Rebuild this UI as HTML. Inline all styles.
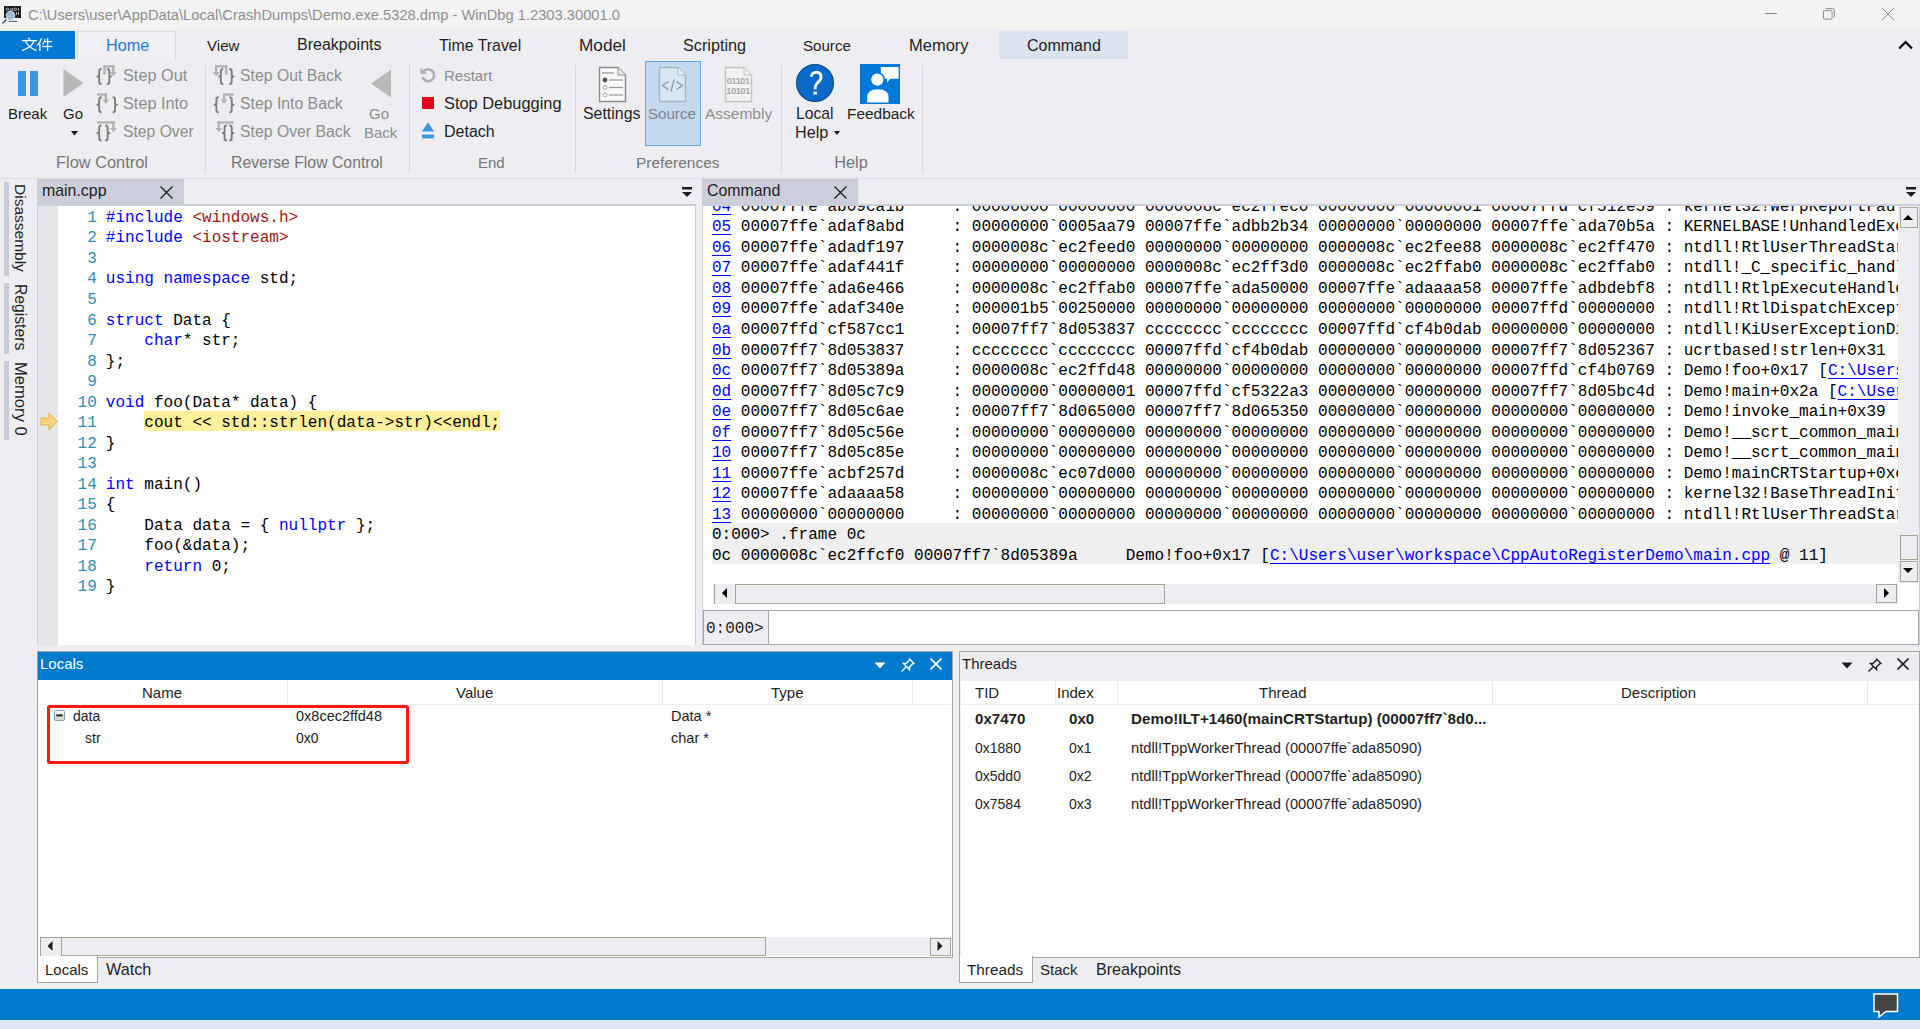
<!DOCTYPE html>
<html><head><meta charset="utf-8">
<style>
*{margin:0;padding:0;box-sizing:border-box}
html,body{width:1920px;height:1029px;overflow:hidden;background:#eeeef2;font-family:"Liberation Sans",sans-serif;font-size:15px;color:#1e1e1e}
.a{position:absolute;white-space:nowrap}
.mono{font-family:"Liberation Mono",monospace;font-size:16.05px}
#title{left:0;top:0;width:1920px;height:29px;background:#f3f3f3}
#tabs{left:0;top:31px;width:1920px;height:29px;background:#eeeef2}
#ribbon{left:0;top:60px;width:1920px;height:119px;background:#eeeef2;border-bottom:1px solid #dcdce2}
.sep{position:absolute;width:1px;background:#d6d6de}
.glabel{position:absolute;top:94px;line-height:17px;color:#767676;font-size:15px;text-align:center}
.grey{color:#8d8d8d}
.panel{position:absolute}
.lbl{font-size:15px;line-height:17px}
.vt{writing-mode:vertical-rl;font-size:15px;line-height:17px;color:#1e1e1e}
.k{color:#0000ff}.s{color:#a31515}
u.ln{color:#0000ff;text-decoration:underline;text-underline-offset:3px}
.hd{font-size:15px;line-height:17px;color:#1e1e1e}
.cell{font-size:14px;line-height:17px;color:#1e1e1e}
</style></head><body>
<div id="title" class="a">
  <svg class="a" style="left:0;top:2px" width="26" height="26" viewBox="0 0 26 26">
    <rect x="3.5" y="3.5" width="18.5" height="13" fill="#fff"/>
    <rect x="4" y="4" width="17" height="12" fill="#1a1c1e"/>
    <g fill="none" stroke="#bbb" stroke-width="1">
      <circle cx="7.4" cy="7.3" r="1.2"/><circle cx="15.4" cy="7.3" r="1.2"/>
    </g>
    <g fill="#bbb"><rect x="10.3" y="6" width="0.9" height="2.7"/><rect x="12.2" y="6" width="0.9" height="2.7"/><rect x="18" y="6" width="1" height="2.7"/>
    <rect x="16" y="10.1" width="1" height="2.8"/><rect x="18" y="10.1" width="1" height="2.8"/></g>
    <path d="M8.5 19.4H17" stroke="#fff" stroke-width="2.6"/>
    <path d="M8.5 19.4H17" stroke="#5c6a74" stroke-width="1.2"/>
    <circle cx="10.5" cy="13.4" r="4.4" fill="#9cbcd8" stroke="#c8d4dc" stroke-width="1"/>
    <path d="M2.5 21.5L6.5 17.3" stroke="#fff" stroke-width="3"/>
    <path d="M2.5 21.5L6.5 17.3" stroke="#50606c" stroke-width="1.8"/>
  </svg>
  <div class="a" style="left:28px;top:7px;font-size:14.7px;color:#8f8f8f">C:\Users\user\AppData\Local\CrashDumps\Demo.exe.5328.dmp - WinDbg 1.2303.30001.0</div>
  <div class="a" style="left:1765px;top:13px;width:12px;height:1px;background:#8a8a8a"></div>
  <svg class="a" style="left:1822px;top:7px" width="14" height="14" viewBox="0 0 14 14"><rect x="1.5" y="3.6" width="8.6" height="8.6" rx="1.3" fill="none" stroke="#8a8a8a" stroke-width="1"/><path d="M3.8 1.6H10.6Q12.4 1.6 12.4 3.4V10" fill="none" stroke="#8a8a8a" stroke-width="1"/></svg>
  <svg class="a" style="left:1881px;top:7px" width="14" height="14"><path d="M1 1L13 13M13 1L1 13" stroke="#8a8a8a" stroke-width="1"/></svg>
</div>
<div id="tabs" class="a">
  <div class="a" style="left:0;top:0;width:75px;height:28px;background:#0078d4"></div>
  <svg class="a" style="left:20px;top:5px" width="34" height="16" viewBox="20 36 34 16">
    <g fill="none" stroke="#fff" stroke-width="1.3" stroke-linecap="butt">
      <path d="M28.2 37.9L30.2 39.6"/>
      <path d="M21.9 40.6H37.1"/>
      <path d="M25.4 41.1Q28 47.5 36.6 50.6"/>
      <path d="M34.2 41.1Q31.5 47.5 22.1 50.6"/>
      <path d="M41.6 38.2Q40 43 37.2 45.6"/>
      <path d="M39.9 43.6V50.9"/>
      <path d="M45.1 39.2Q44.3 42.5 42.5 44.6"/>
      <path d="M44.4 41.6H51.9"/>
      <path d="M42.2 46.5H52.4"/>
      <path d="M47.6 37.9V50.9"/>
    </g>
  </svg>
  <div class="a" style="left:77px;top:0;width:99px;height:29px;background:#f0f0f4;border:1px solid #dcdce2;border-bottom:none"></div>
  <div class="a" style="left:106px;top:4.9px;color:#1c7cd6;font-size:16.2px">Home</div>
  <div class="a" style="left:207px;top:5.93px;font-size:15.1px">View</div>
  <div class="a" style="left:297px;top:5.12px;font-size:16px">Breakpoints</div>
  <div class="a" style="left:439px;top:5.8px;font-size:15.85px">Time Travel</div>
  <div class="a" style="left:579px;top:4.03px;font-size:17.2px">Model</div>
  <div class="a" style="left:683px;top:4.94px;font-size:16.2px">Scripting</div>
  <div class="a" style="left:803px;top:5.93px;font-size:15.1px">Source</div>
  <div class="a" style="left:909px;top:4.67px;font-size:16.5px">Memory</div>
  <div class="a" style="left:999px;top:0;width:129px;height:28px;background:#dae3ee"></div>
  <div class="a" style="left:1027px;top:5.7px;font-size:16px">Command</div>
  <svg class="a" style="left:1898px;top:9px" width="16" height="10"><path d="M1.2 8.5L7.6 2L14 8.5" fill="none" stroke="#000" stroke-width="2.2"/></svg>
</div>
<div id="ribbon" class="a">
  <!-- Break -->
  <div class="a" style="left:18px;top:11px;width:8px;height:25px;background:#3a96e0"></div>
  <div class="a" style="left:30px;top:11px;width:8px;height:25px;background:#3a96e0"></div>
  <div class="a lbl" style="left:8px;top:45px">Break</div>
  <svg class="a" style="left:63px;top:9px" width="21" height="28"><path d="M0.5 0L20.5 14L0.5 28Z" fill="#b8b8b8"/></svg>
  <div class="a lbl" style="left:63px;top:45px">Go</div>
  <svg class="a" style="left:71px;top:71px" width="7" height="5"><path d="M0 0H7L3.5 4.5Z" fill="#111"/></svg>
  <!-- step icons -->
  
  <div class="a lbl grey" style="left:123px;top:7px;font-size:16.3px">Step Out</div>
  <div class="a lbl grey" style="left:123px;top:35px;font-size:16.3px">Step Into</div>
  <div class="a lbl grey" style="left:123px;top:63px;font-size:15.7px">Step Over</div>
  <div class="glabel" style="left:56px;width:91px;font-size:16.4px">Flow Control</div>
  <div class="sep" style="left:205px;top:5px;height:108px"></div>
  
  <div class="a lbl grey" style="left:240px;top:7px;font-size:15.8px">Step Out Back</div>
  <div class="a lbl grey" style="left:240px;top:35px;font-size:15.8px">Step Into Back</div>
  <div class="a lbl grey" style="left:240px;top:63px;font-size:15.8px">Step Over Back</div>
  <svg class="a" style="left:370px;top:9px" width="22" height="29"><path d="M21 0.5L1 14.5L21 28.5Z" fill="#b8b8b8"/></svg>
  <div class="a lbl grey" style="left:369px;top:45px">Go</div>
  <div class="a lbl grey" style="left:364px;top:64px">Back</div>
  <div class="glabel" style="left:231px;width:151px;font-size:15.8px">Reverse Flow Control</div>
  <div class="sep" style="left:409px;top:5px;height:108px"></div>
  <svg class="a" style="left:419px;top:6px" width="18" height="18" viewBox="0 0 18 18"><path d="M4.5 5.5A6 6 0 1 1 3.5 11" fill="none" stroke="#b0b0b0" stroke-width="2.6"/><path d="M1.5 1.5V8H8Z" fill="#b0b0b0"/></svg>
  <div class="a lbl grey" style="left:444px;top:7px">Restart</div>
  <div class="a" style="left:422px;top:37px;width:12px;height:12px;background:#e3001b"></div>
  <div class="a lbl" style="left:444px;top:35px;font-size:16.4px">Stop Debugging</div>
  <svg class="a" style="left:421px;top:62px" width="14" height="17"><path d="M7 0.3L13 9.5H1Z" fill="#3a96e0"/><rect x="1" y="12.6" width="12" height="3.8" fill="#3a96e0"/></svg>
  <div class="a lbl" style="left:444px;top:63px;font-size:16px">Detach</div>
  <div class="glabel" style="left:478px;width:26px">End</div>
  <div class="sep" style="left:575px;top:5px;height:108px"></div>
  <!-- settings -->
  <svg class="a" style="left:598px;top:6px" width="29" height="37" viewBox="0 0 29 37">
    <path d="M1.5 1.5H20L27.5 9V35.5H1.5Z" fill="#f8f8f8" stroke="#8c8c8c" stroke-width="1.4"/>
    <path d="M20 1.5V9H27.5" fill="#e8e8e8" stroke="#8c8c8c" stroke-width="1"/>
    <line x1="4" y1="7" x2="16" y2="7" stroke="#999" stroke-width="1.2"/>
    <circle cx="7" cy="14" r="2.4" fill="#555"/>
    <line x1="11" y1="14" x2="25" y2="14" stroke="#999" stroke-width="1.2"/>
    <circle cx="7" cy="21.5" r="2" fill="none" stroke="#aaa"/>
    <line x1="11" y1="21.5" x2="25" y2="21.5" stroke="#999" stroke-width="1.2"/>
    <circle cx="7" cy="29" r="2" fill="none" stroke="#aaa"/>
    <line x1="11" y1="29" x2="25" y2="29" stroke="#999" stroke-width="1.2"/>
  </svg>
  <div class="a lbl" style="left:583px;top:45px;font-size:15.9px">Settings</div>
  <div class="a" style="left:645px;top:1px;width:56px;height:85px;background:#c4d9ee;border:1px solid #5fa8e4"></div>
  <svg class="a" style="left:658px;top:6px" width="29" height="37" viewBox="0 0 29 37">
    <path d="M1.5 1.5H20L27.5 9V35.5H1.5Z" fill="#dae6f2" stroke="#a9b6c2" stroke-width="1.4"/>
    <path d="M20 1.5V9H27.5" fill="#e8eef4" stroke="#a9b6c2" stroke-width="1"/>
    <path d="M10.5 15.5L4.5 19.5L10.5 23.5M18.5 15.5L24.5 19.5L18.5 23.5M16 13.5L13 25.5" fill="none" stroke="#8d959d" stroke-width="1.2"/>
  </svg>
  <div class="a lbl" style="left:648px;top:45px;color:#7d8590;font-size:15.1px">Source</div>
  <svg class="a" style="left:724px;top:6px" width="29" height="37" viewBox="0 0 29 37">
    <path d="M1.5 1.5H20L27.5 9V35.5H1.5Z" fill="#f3f3f3" stroke="#c4c4c4" stroke-width="1.4"/>
    <path d="M20 1.5V9H27.5" fill="#eee" stroke="#c4c4c4" stroke-width="1"/>
    <text x="14" y="17.5" font-family="Liberation Sans" font-size="9.5" font-weight="bold" fill="#aaa" text-anchor="middle" letter-spacing="-0.6">01101</text>
    <text x="14" y="28" font-family="Liberation Sans" font-size="9.5" font-weight="bold" fill="#aaa" text-anchor="middle" letter-spacing="-0.6">10101</text>
  </svg>
  <div class="a lbl grey" style="left:705px;top:45px;font-size:15.5px">Assembly</div>
  <div class="glabel" style="left:636px;width:83px;font-size:15.5px">Preferences</div>
  <div class="sep" style="left:781px;top:5px;height:108px"></div>
  <svg class="a" style="left:795px;top:3px" width="40" height="40" viewBox="0 0 40 40">
    <circle cx="20" cy="20" r="18.4" fill="#096ac8" stroke="#0b4d8c" stroke-width="1.3"/>
    <path d="M16.3 13.8Q16.8 9.4 21.4 9.4Q26 9.4 26 13.9Q26 16.9 23 19.4Q20.2 21.7 20.2 24.5V26.2" fill="none" stroke="#fff" stroke-width="2.8"/>
    <rect x="18.5" y="28.6" width="3.4" height="3" fill="#fff"/>
  </svg>
  <div class="a lbl" style="left:796px;top:45px;font-size:15.7px">Local</div>
  <div class="a lbl" style="left:795px;top:64px;font-size:16.2px">Help</div>
  <svg class="a" style="left:834px;top:71px" width="6" height="5"><path d="M0 0H6L3 4Z" fill="#111"/></svg>
  <svg class="a" style="left:860px;top:4px" width="40" height="40" viewBox="0 0 40 40">
    <rect width="40" height="40" fill="#0078d7"/>
    <path d="M20.8 2.9H38.6V14.8H30.5L27 18.6V14.8H20.8Z" fill="#fff"/>
    <circle cx="17.3" cy="15.6" r="6.9" fill="#fff" stroke="#0078d7" stroke-width="1.6"/>
    <path d="M7.2 38.6V33Q7.2 25.2 17.8 25.2Q28.5 25.2 28.5 33V38.6Z" fill="#fff"/>
  </svg>
  <div class="a lbl" style="left:847px;top:45px;font-size:15.45px">Feedback</div>
  <div class="glabel" style="left:834px;width:34px;font-size:16.4px">Help</div>
  <div class="sep" style="left:922px;top:5px;height:108px"></div>
</div>
<svg class="a" style="left:0;top:0" width="300" height="150"><path d="M103.3 65.2H114.6V67.6H105.8V74.6H103.3Z" fill="#b3b3b3"/><path d="M112 65.2H114.6V72.1H116.8L113.3 76.3L109.8 72.1H112Z" fill="#b3b3b3"/><path d="M97 93.3H107V95.7H97Z" fill="#b3b3b3"/><path d="M104.6 93.3H107V99.6H109.3L105.8 103.8L102.3 99.6H104.6Z" fill="#b3b3b3"/><path d="M97 121.3H114.6V123.7H97Z" fill="#b3b3b3"/><path d="M112.2 121.3H114.6V127.99999999999999H116.9L113.4 132.2L109.9 127.99999999999999H112.2Z" fill="#b3b3b3"/><path d="M215 65.2H227.5V74.6H225.1V67.6H215Z" fill="#b3b3b3"/><path d="M215 65.2H217.4V72.1H219.7L216.2 76.3L212.7 72.1H215Z" fill="#b3b3b3"/><path d="M222.9 93.3H233.8V95.7H222.9Z" fill="#b3b3b3"/><path d="M222.9 93.3H225.3V99.6H227.60000000000002L224.10000000000002 103.8L220.60000000000002 99.6H222.9Z" fill="#b3b3b3"/><path d="M217.5 121.3H233.8V123.7H217.5Z" fill="#b3b3b3"/><path d="M217.5 121.3H219.9V127.99999999999999H222.2L218.7 132.2L215.2 127.99999999999999H217.5Z" fill="#b3b3b3"/><g fill="none" stroke="#7d7d7d" stroke-width="1.9" stroke-linejoin="round"><path d="M101.6 68.9Q99.2 68.9 99.2 71.2V74.9Q99.2 76.5 97.4 76.5Q99.2 76.5 99.2 78.1V81.8Q99.2 84.1 101.6 84.1"/><path d="M106.9 68.9Q109.3 68.9 109.3 71.2V74.9Q109.3 76.5 111.1 76.5Q109.3 76.5 109.3 78.1V81.8Q109.3 84.1 106.9 84.1"/><path d="M101.6 97.2Q99.2 97.2 99.2 99.5V103.2Q99.2 104.8 97.4 104.8Q99.2 104.8 99.2 106.39999999999999V110.1Q99.2 112.39999999999999 101.6 112.39999999999999"/><path d="M112.60000000000001 97.2Q115.0 97.2 115.0 99.5V103.2Q115.0 104.8 116.8 104.8Q115.0 104.8 115.0 106.39999999999999V110.1Q115.0 112.39999999999999 112.60000000000001 112.39999999999999"/><path d="M101.6 125.4Q99.2 125.4 99.2 127.7V131.4Q99.2 133.0 97.4 133.0Q99.2 133.0 99.2 134.6V138.3Q99.2 140.6 101.6 140.6"/><path d="M105.2 125.4Q107.6 125.4 107.6 127.7V131.4Q107.6 133.0 109.39999999999999 133.0Q107.6 133.0 107.6 134.6V138.3Q107.6 140.6 105.2 140.6"/><path d="M223.29999999999998 68.9Q220.89999999999998 68.9 220.89999999999998 71.2V74.9Q220.89999999999998 76.5 219.1 76.5Q220.89999999999998 76.5 220.89999999999998 78.1V81.8Q220.89999999999998 84.1 223.29999999999998 84.1"/><path d="M229.3 68.9Q231.70000000000002 68.9 231.70000000000002 71.2V74.9Q231.70000000000002 76.5 233.5 76.5Q231.70000000000002 76.5 231.70000000000002 78.1V81.8Q231.70000000000002 84.1 229.3 84.1"/><path d="M218.79999999999998 97.2Q216.39999999999998 97.2 216.39999999999998 99.5V103.2Q216.39999999999998 104.8 214.6 104.8Q216.39999999999998 104.8 216.39999999999998 106.39999999999999V110.1Q216.39999999999998 112.39999999999999 218.79999999999998 112.39999999999999"/><path d="M229.3 97.2Q231.70000000000002 97.2 231.70000000000002 99.5V103.2Q231.70000000000002 104.8 233.5 104.8Q231.70000000000002 104.8 231.70000000000002 106.39999999999999V110.1Q231.70000000000002 112.39999999999999 229.3 112.39999999999999"/><path d="M227.0 125.4Q224.6 125.4 224.6 127.7V131.4Q224.6 133.0 222.8 133.0Q224.6 133.0 224.6 134.6V138.3Q224.6 140.6 227.0 140.6"/><path d="M229.3 125.4Q231.70000000000002 125.4 231.70000000000002 127.7V131.4Q231.70000000000002 133.0 233.5 133.0Q231.70000000000002 133.0 231.70000000000002 134.6V138.3Q231.70000000000002 140.6 229.3 140.6"/></g></svg>
<div class="a" style="left:4px;top:182px;width:5px;height:94px;background:#c9cbd9"></div>
<div class="a vt" style="left:12.2px;top:184px;height:90px;font-size:15.5px">Disassembly</div>
<div class="a" style="left:4px;top:283px;width:5px;height:71px;background:#c9cbd9"></div>
<div class="a vt" style="left:12.2px;top:284px;height:70px;font-size:15.7px">Registers</div>
<div class="a" style="left:4px;top:361px;width:5px;height:79px;background:#c9cbd9"></div>
<div class="a vt" style="left:12.2px;top:362px;height:76px;font-size:16.6px">Memory 0</div>
<div class="a" style="left:37px;top:179px;width:659px;height:466px;background:#eeeef2"></div>
<div class="a" style="left:37px;top:179px;width:147px;height:25px;background:#cccedb"></div>
<div class="a" style="left:42px;top:182px;font-size:15.9px;line-height:17px">main.cpp</div>
<svg class="a" style="left:160px;top:186px" width="13" height="13"><path d="M0.5 0.5L12.5 12.5M12.5 0.5L0.5 12.5" stroke="#1e1e1e" stroke-width="1.3"/></svg>
<svg class="a" style="left:682px;top:187px" width="11" height="11"><rect x="0" y="0" width="10" height="2.5" fill="#1e1e1e"/><path d="M0 5H10L5 10Z" fill="#1e1e1e"/></svg>
<div class="a" style="left:37px;top:204px;width:659px;height:2px;background:#cccedb"></div>
<div class="a" style="left:37px;top:206px;width:1px;height:439px;background:#cccedb"></div>
<div class="a" style="left:38px;top:206px;width:20px;height:439px;background:#e6e7e8"></div>
<div class="a" style="left:58px;top:206px;width:637px;height:439px;background:#fff"></div>
<div class="a" style="left:695px;top:206px;width:1px;height:439px;background:#cccedb"></div>
<div class="a" style="left:144.4px;top:411.2px;width:356px;height:19.6px;background:#fff09b"></div>
<svg class="a" style="left:40px;top:412px" width="18" height="19" viewBox="0 0 18 19"><path d="M1 6H9V1L17 9.5L9 18V13H1Z" fill="#f7d47c" stroke="#eba94c" stroke-width="1"/></svg>

<div class="a mono" style="left:58px;top:207.9px;width:38.8px;text-align:right;line-height:20.53px;color:#2b91af;white-space:pre">1
2
3
4
5
6
7
8
9
10
11
12
13
14
15
16
17
18
19</div>
<div class="a mono" style="left:105.8px;top:207.9px;line-height:20.53px;color:#000;white-space:pre"><span class="k">#include</span> <span class="s">&lt;windows.h&gt;</span>
<span class="k">#include</span> <span class="s">&lt;iostream&gt;</span>

<span class="k">using</span> <span class="k">namespace</span> std;

<span class="k">struct</span> Data {
    <span class="k">char</span>* str;
};

<span class="k">void</span> foo(Data* data) {
    cout &lt;&lt; std::strlen(data-&gt;str)&lt;&lt;endl;
}

<span class="k">int</span> main()
{
    Data data = { <span class="k">nullptr</span> };
    foo(&amp;data);
    <span class="k">return</span> 0;
}</div>
<div class="a" style="left:702px;top:179px;width:1218px;height:466px;background:#eeeef2"></div>
<div class="a" style="left:702px;top:179px;width:156px;height:25px;background:#cccedb"></div>
<div class="a" style="left:707px;top:182px;font-size:15.9px;line-height:17px">Command</div>
<svg class="a" style="left:834px;top:186px" width="13" height="13"><path d="M0.5 0.5L12.5 12.5M12.5 0.5L0.5 12.5" stroke="#1e1e1e" stroke-width="1.3"/></svg>
<svg class="a" style="left:1906px;top:187px" width="11" height="11"><rect x="0" y="0" width="10" height="2.5" fill="#1e1e1e"/><path d="M0 5H10L5 10Z" fill="#1e1e1e"/></svg>
<div class="a" style="left:702px;top:204px;width:1218px;height:2px;background:#cccedb"></div>
<div class="a" style="left:702px;top:206px;width:1px;height:439px;background:#cccedb"></div>
<div class="a" style="left:703px;top:206px;width:1195px;height:404px;background:#fff"></div>

<div class="a" style="left:703px;top:206px;width:1195px;height:377px;overflow:hidden">
<div class="a" style="left:9px;top:317px;width:1186px;height:41px;background:#efefef"></div>
<div class="a mono" style="left:9px;top:-9.2px;line-height:20.53px;color:#000;white-space:pre"><u class="ln">04</u> 00007ffe`ab09ca1b     : 00000000`00000000 0000008c`ec2ffec0 00000000`00000001 00007ffd`cf512e59 : kernel32!WerpReportFault+0x51
<u class="ln">05</u> 00007ffe`adaf8abd     : 00000000`0005aa79 00007ffe`adbb2b34 00000000`00000000 00007ffe`ada70b5a : KERNELBASE!UnhandledExceptionFilter+0x3dd
<u class="ln">06</u> 00007ffe`adadf197     : 0000008c`ec2feed0 00000000`00000000 0000008c`ec2fee88 0000008c`ec2ff470 : ntdll!RtlUserThreadStart$filt$0+0xa2
<u class="ln">07</u> 00007ffe`adaf441f     : 00000000`00000000 0000008c`ec2ff3d0 0000008c`ec2ffab0 0000008c`ec2ffab0 : ntdll!_C_specific_handler+0x93
<u class="ln">08</u> 00007ffe`ada6e466     : 0000008c`ec2ffab0 00007ffe`ada50000 00007ffe`adaaaa58 00007ffe`adbdebf8 : ntdll!RtlpExecuteHandlerForException+0xf
<u class="ln">09</u> 00007ffe`adaf340e     : 000001b5`00250000 00000000`00000000 00000000`00000000 00007ffd`00000000 : ntdll!RtlDispatchException+0x286
<u class="ln">0a</u> 00007ffd`cf587cc1     : 00007ff7`8d053837 cccccccc`cccccccc 00007ffd`cf4b0dab 00000000`00000000 : ntdll!KiUserExceptionDispatch+0x2e
<u class="ln">0b</u> 00007ff7`8d053837     : cccccccc`cccccccc 00007ffd`cf4b0dab 00000000`00000000 00007ff7`8d052367 : ucrtbased!strlen+0x31
<u class="ln">0c</u> 00007ff7`8d05389a     : 0000008c`ec2ffd48 00000000`00000000 00000000`00000000 00007ffd`cf4b0769 : Demo!foo+0x17 [<u class="ln">C:\Users\user\workspace</u>
<u class="ln">0d</u> 00007ff7`8d05c7c9     : 00000000`00000001 00007ffd`cf5322a3 00000000`00000000 00007ff7`8d05bc4d : Demo!main+0x2a [<u class="ln">C:\Users\user\workspace</u>
<u class="ln">0e</u> 00007ff7`8d05c6ae     : 00007ff7`8d065000 00007ff7`8d065350 00000000`00000000 00000000`00000000 : Demo!invoke_main+0x39
<u class="ln">0f</u> 00007ff7`8d05c56e     : 00000000`00000000 00000000`00000000 00000000`00000000 00000000`00000000 : Demo!__scrt_common_main_seh+0x10c
<u class="ln">10</u> 00007ff7`8d05c85e     : 00000000`00000000 00000000`00000000 00000000`00000000 00000000`00000000 : Demo!__scrt_common_main+0xe
<u class="ln">11</u> 00007ffe`acbf257d     : 0000008c`ec07d000 00000000`00000000 00000000`00000000 00000000`00000000 : Demo!mainCRTStartup+0xe
<u class="ln">12</u> 00007ffe`adaaaa58     : 00000000`00000000 00000000`00000000 00000000`00000000 00000000`00000000 : kernel32!BaseThreadInitThunk+0x1d
<u class="ln">13</u> 00000000`00000000     : 00000000`00000000 00000000`00000000 00000000`00000000 00000000`00000000 : ntdll!RtlUserThreadStart+0x28
0:000&gt; .frame 0c
0c 0000008c`ec2ffcf0 00007ff7`8d05389a     Demo!foo+0x17 [<u class="ln">C:\Users\user\workspace\CppAutoRegisterDemo\main.cpp</u> @ 11]</div>
</div>
<div class="a" style="left:1898px;top:206px;width:21px;height:377px;background:#eeeef2"></div>
<div class="a" style="left:1919px;top:206px;width:1px;height:439px;background:#cccedb"></div>
<div class="a" style="left:1899.5px;top:207px;width:18.5px;height:20.5px;border:1px solid #a8a397;background:#eeeef2"></div>
<svg class="a" style="left:1903px;top:215px" width="10" height="6"><path d="M0 5H10L5 0Z" fill="#000"/></svg>
<div class="a" style="left:1899.5px;top:535px;width:18.5px;height:25px;border:1px solid #a8a397;background:#eeeef2"></div>
<div class="a" style="left:1899.5px;top:561px;width:18.5px;height:20.5px;border:1px solid #a8a397;background:#eeeef2"></div>
<svg class="a" style="left:1903px;top:568px" width="10" height="6"><path d="M0 0H10L5 5Z" fill="#000"/></svg>

<div class="a" style="left:703px;top:583px;width:1216px;height:27px;background:#fff"></div>
<div class="a" style="left:712.5px;top:583.5px;width:1185px;height:20.5px;background:#eeeef2"></div>
<div class="a" style="left:714px;top:584px;width:21px;height:19.5px;border-left:1px solid #a8a397"></div>
<svg class="a" style="left:722px;top:588px" width="6" height="10"><path d="M5 0V10L0 5Z" fill="#000"/></svg>
<div class="a" style="left:735px;top:584px;width:430px;height:19.5px;border:1.5px solid #a8a397;background:#eeeef2"></div>
<div class="a" style="left:1876px;top:584px;width:21px;height:19px;border:1px solid #a8a397"></div>
<svg class="a" style="left:1884px;top:588px" width="6" height="10"><path d="M0 0V10L5 5Z" fill="#000"/></svg>

<div class="a" style="left:703px;top:610px;width:1216px;height:35px;background:#fff;border:1.5px solid #a6a7ad"></div>
<div class="a" style="left:703px;top:610px;width:66px;height:35px;background:#eeeef2;border:1.5px solid #a6a7ad"></div>
<div class="a mono" style="left:706px;top:619px;line-height:20px">0:000&gt;</div>

<div class="a" style="left:37px;top:651px;width:916px;height:307px;background:#eeeef2;border:1px solid #aaa69c"></div>
<div class="a" style="left:38px;top:651.5px;width:914px;height:28.5px;background:#007acc"></div>
<div class="a" style="left:40px;top:655px;color:#fff;line-height:17px">Locals</div>
<svg class="a" style="left:874px;top:661.5px" width="12" height="7"><path d="M0.5 0.5H11.5L6 6.5Z" fill="#fff"/></svg>
<svg class="a" style="left:900px;top:657px" width="16" height="16" viewBox="0 0 16 16"><path d="M9 1.5L14.5 7M10 2.5L6 6.5L3.5 6.5L9.5 12.5V10L13.5 6M6.5 9.5L1.5 14.5" fill="none" stroke="#fff" stroke-width="1.4"/></svg>
<svg class="a" style="left:930px;top:658px" width="12" height="12"><path d="M0.5 0.5L11.5 11.5M11.5 0.5L0.5 11.5" stroke="#fff" stroke-width="1.6"/></svg>
<div class="a" style="left:38px;top:680px;width:914px;height:277px;background:#fff"></div>
<div class="a" style="left:38px;top:704px;width:913px;height:1px;background:#eeeef2"></div>
<div class="a" style="left:287px;top:681px;width:1px;height:23px;background:#e6e6ea"></div>
<div class="a" style="left:662px;top:681px;width:1px;height:23px;background:#e6e6ea"></div>
<div class="a" style="left:912px;top:681px;width:1px;height:23px;background:#e6e6ea"></div>
<div class="a hd" style="left:142px;top:684px">Name</div>
<div class="a hd" style="left:456px;top:684px">Value</div>
<div class="a hd" style="left:771px;top:684px">Type</div>
<svg class="a" style="left:54px;top:710px" width="12" height="12"><defs><linearGradient id="mg" x1="0" y1="0" x2="0" y2="1"><stop offset="0" stop-color="#fff"/><stop offset="1" stop-color="#d9d2c2"/></linearGradient></defs><rect x="0.5" y="0.5" width="10" height="10" rx="1.2" fill="url(#mg)" stroke="#80a0bc"/><rect x="2.2" y="4.3" width="6.6" height="2.2" fill="#333"/></svg>
<div class="a cell" style="left:73px;top:708px">data</div>
<div class="a cell" style="left:296px;top:708px;font-size:14.5px">0x8cec2ffd48</div>
<div class="a cell" style="left:671px;top:708px;font-size:14.5px">Data *</div>
<div class="a cell" style="left:85px;top:730px">str</div>
<div class="a cell" style="left:296px;top:730px">0x0</div>
<div class="a cell" style="left:671px;top:730px;font-size:14.5px">char *</div>
<div class="a" style="left:47px;top:705px;width:362px;height:59px;border:3px solid #fc1b12;border-radius:2.5px"></div>
<div class="a" style="left:40px;top:937px;width:911px;height:18.5px;background:#eeeef2"></div>
<div class="a" style="left:40px;top:937px;width:21px;height:18.5px;border:1px solid #a8a397;border-right:none;border-bottom:none"></div>
<svg class="a" style="left:47px;top:941px" width="6" height="10"><path d="M5.5 0V10L0.5 5Z" fill="#1e1e1e"/></svg>
<div class="a" style="left:61px;top:937px;width:705px;height:18.5px;border:1.5px solid #a8a397;background:#eeeef2"></div>
<div class="a" style="left:930px;top:937.5px;width:21px;height:18.5px;border:1px solid #a8a397"></div>
<svg class="a" style="left:937px;top:941px" width="6" height="10"><path d="M0.5 0V10L5.5 5Z" fill="#1e1e1e"/></svg>
<div class="a" style="left:37px;top:956px;width:61px;height:27px;background:#fff;border:1px solid #aaa69c;border-top:none"></div>
<div class="a" style="left:45px;top:961px;line-height:17px">Locals</div>
<div class="a" style="left:106px;top:961px;line-height:17px;font-size:16.2px">Watch</div>

<div class="a" style="left:959px;top:651px;width:961px;height:307px;background:#eeeef2;border:1px solid #aaa69c;border-top-width:1.5px"></div>
<div class="a" style="left:962px;top:655px;line-height:17px">Threads</div>
<svg class="a" style="left:1841px;top:661.5px" width="12" height="7"><path d="M0.5 0.5H11.5L6 6.5Z" fill="#1e1e1e"/></svg>
<svg class="a" style="left:1867px;top:657px" width="16" height="16" viewBox="0 0 16 16"><path d="M9 1.5L14.5 7M10 2.5L6 6.5L3.5 6.5L9.5 12.5V10L13.5 6M6.5 9.5L1.5 14.5" fill="none" stroke="#1e1e1e" stroke-width="1.4"/></svg>
<svg class="a" style="left:1897px;top:658px" width="12" height="12"><path d="M0.5 0.5L11.5 11.5M11.5 0.5L0.5 11.5" stroke="#1e1e1e" stroke-width="1.6"/></svg>
<div class="a" style="left:961px;top:680.5px;width:958px;height:276.5px;background:#fff"></div>
<div class="a" style="left:961px;top:704px;width:958px;height:1px;background:#eeeef2"></div>
<div class="a" style="left:1055px;top:681px;width:1px;height:23px;background:#e6e6ea"></div>
<div class="a" style="left:1117px;top:681px;width:1px;height:23px;background:#e6e6ea"></div>
<div class="a" style="left:1492px;top:681px;width:1px;height:23px;background:#e6e6ea"></div>
<div class="a" style="left:1867px;top:681px;width:1px;height:23px;background:#e6e6ea"></div>
<div class="a hd" style="left:975px;top:684px">TID</div>
<div class="a hd" style="left:1057px;top:684px">Index</div>
<div class="a hd" style="left:1259px;top:684px">Thread</div>
<div class="a hd" style="left:1621px;top:684px">Description</div>
<div class="a cell" style="left:975px;top:710.3px;font-weight:bold;font-size:15.1px">0x7470</div>
<div class="a cell" style="left:1069px;top:710.3px;font-weight:bold;font-size:15.1px">0x0</div>
<div class="a cell" style="left:1131px;top:710.3px;font-weight:bold;font-size:15.2px">Demo!ILT+1460(mainCRTStartup) (00007ff7`8d0...</div>
<div class="a cell" style="left:975px;top:739.5px">0x1880</div>
<div class="a cell" style="left:1069px;top:739.5px">0x1</div>
<div class="a cell" style="left:1131px;top:739.5px;font-size:14.7px">ntdll!TppWorkerThread (00007ffe`ada85090)</div>
<div class="a cell" style="left:975px;top:767.5px">0x5dd0</div>
<div class="a cell" style="left:1069px;top:767.5px">0x2</div>
<div class="a cell" style="left:1131px;top:767.5px;font-size:14.7px">ntdll!TppWorkerThread (00007ffe`ada85090)</div>
<div class="a cell" style="left:975px;top:795.5px">0x7584</div>
<div class="a cell" style="left:1069px;top:795.5px">0x3</div>
<div class="a cell" style="left:1131px;top:795.5px;font-size:14.7px">ntdll!TppWorkerThread (00007ffe`ada85090)</div>
<div class="a" style="left:959px;top:956px;width:74px;height:27px;background:#fff;border:1px solid #aaa69c;border-top:none"></div>
<div class="a" style="left:967px;top:961px;line-height:17px;font-size:15.3px">Threads</div>
<div class="a" style="left:1040px;top:961px;line-height:17px">Stack</div>
<div class="a" style="left:1096px;top:961px;line-height:17px;font-size:16.1px">Breakpoints</div>

<div class="a" style="left:0;top:989px;width:1920px;height:31px;background:#007acc"></div>
<div class="a" style="left:0;top:1020px;width:1920px;height:9px;background:#dfe9f5"></div>
<svg class="a" style="left:1873px;top:993px" width="26" height="25" viewBox="0 0 26 25"><path d="M1 1H24.5V18.5H13L6 24V18.5H1Z" fill="#444" stroke="#fff" stroke-width="1.5"/></svg>

</body></html>
